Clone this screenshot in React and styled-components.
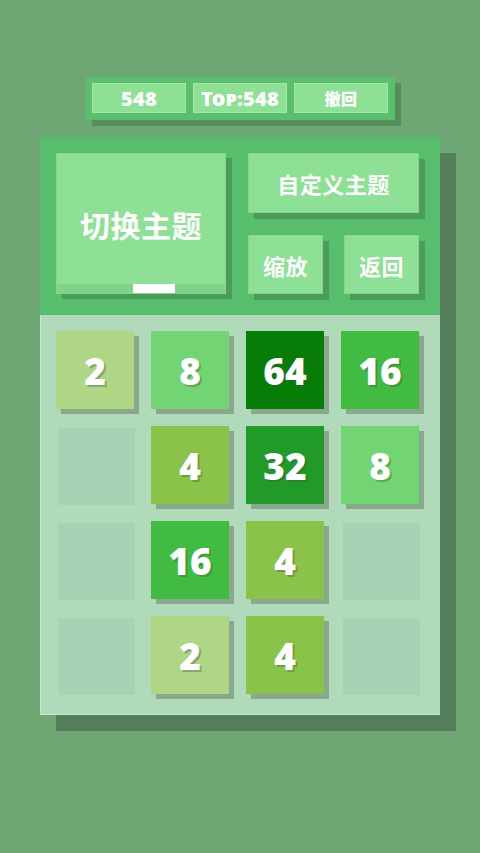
import React from "react";
import styled, { createGlobalStyle } from "styled-components";

const GlobalStyle = createGlobalStyle`
  html, body {
    margin: 0;
    padding: 0;
    background: #6ea774;
  }
  body {
    font-family: "Noto Sans", "Noto Sans CJK SC", sans-serif;
  }
`;

const Page = styled.div`
  width: 480px;
  min-height: 853px;
  display: flex;
  flex-direction: column;
  align-items: center;
  padding-top: 77px;
  box-sizing: border-box;
`;

const ScoreBar = styled.div`
  display: flex;
  gap: 7px;
  padding: 6px 7px 7px 6px;
  background: #5abe6d;
  box-shadow: 6px 6px 0 #568d5d;
  margin-left: 1px;
`;

const ScoreCell = styled.div`
  width: 94px;
  height: 30px;
  box-sizing: border-box;
  border: 1px solid #a2e8a9;
  background: #8de095;
  color: #fff;
  display: flex;
  align-items: center;
  justify-content: center;
  font-family: "Noto Sans", "Noto Sans CJK SC", sans-serif;
  font-weight: 900;
  font-size: ${(p) => (p.$cjk ? "16px" : "20px")};
  font-variant: small-caps;
  letter-spacing: 0.3px;
`;

const Panel = styled.div`
  margin-top: 17px;
  width: 400px;
  display: flex;
  flex-direction: column;
  box-shadow: 16px 16px 0 #557f5a;
`;

const Header = styled.div`
  background: #58bd6c;
  padding: 16px 21px 21px 16px;
  display: flex;
  gap: 22px;
`;

const BigButton = styled.div`
  position: relative;
  width: 170px;
  height: 141px;
  box-sizing: border-box;
  background: #8de095;
  border: 1px solid #84d68c;
  box-shadow: 6px 5px 0 #4b9c5a;
  display: flex;
  align-items: center;
  justify-content: center;
  color: #fff;
  font-family: "Noto Sans CJK SC", sans-serif;
  font-weight: 700;
  font-size: 30px;
  letter-spacing: 0.5px;
`;

const ButtonFooter = styled.div`
  position: absolute;
  left: 0;
  right: 0;
  bottom: 0;
  height: 9px;
  background: #83d28c;
  display: flex;
  justify-content: center;
`;

const Indicator = styled.div`
  width: 42px;
  height: 9px;
  background: #ffffff;
  margin-left: 26px;
`;

const SideColumn = styled.div`
  display: flex;
  flex-direction: column;
  gap: 22px;
`;

const SideRow = styled.div`
  display: flex;
  gap: 21px;
`;

const Button = styled.div`
  width: ${(p) => p.$w}px;
  height: ${(p) => p.$h}px;
  box-sizing: border-box;
  background: #8de095;
  border: 1px solid #84d68c;
  box-shadow: 6px 6px 0 #4b9c5a;
  display: flex;
  align-items: center;
  justify-content: center;
  color: #fff;
  font-family: "Noto Sans CJK SC", sans-serif;
  font-weight: 700;
  font-size: 22px;
  letter-spacing: 0.5px;
`;

const Board = styled.div`
  background: #b0dab9;
  border-left: 1px solid #c4e6cb;
  border-bottom: 1px solid #c4e6cb;
  padding: 18px 20px 19px 17px;
  display: grid;
  grid-template-columns: repeat(4, 77px);
  grid-auto-rows: 77px;
  gap: 18px;
`;

const Cell = styled.div`
  position: relative;
  background: #a8d2b4;
`;

const TILE_COLORS = {
  2: "#aed685",
  4: "#8bc34a",
  8: "#72d472",
  16: "#42bb42",
  32: "#229a29",
  64: "#077d07",
};

const Tile = styled.div`
  position: absolute;
  left: -2px;
  top: -2px;
  width: 78px;
  height: 78px;
  background: ${(p) => TILE_COLORS[p.$value]};
  box-shadow: 5px 5px 0 #8ba78e;
  display: flex;
  align-items: center;
  justify-content: center;
  color: #fff;
  font-family: "Noto Sans", "DejaVu Sans", sans-serif;
  font-weight: 900;
  font-size: 37px;
  letter-spacing: 0px;
  text-shadow: 2px 2px 0 rgba(60, 80, 60, 0.35);
`;

const grid = [
  [2, 8, 64, 16],
  [0, 4, 32, 8],
  [0, 16, 4, 0],
  [0, 2, 4, 0],
];

export default function App() {
  return (
    <>
      <GlobalStyle />
      <Page>
        <ScoreBar>
          <ScoreCell>548</ScoreCell>
          <ScoreCell>Top:548</ScoreCell>
          <ScoreCell $cjk>撤回</ScoreCell>
        </ScoreBar>
        <Panel>
          <Header>
            <BigButton>
              切换主题
              <ButtonFooter>
                <Indicator />
              </ButtonFooter>
            </BigButton>
            <SideColumn>
              <Button $w={171} $h={60}>自定义主题</Button>
              <SideRow>
                <Button $w={75} $h={59}>缩放</Button>
                <Button $w={75} $h={59}>返回</Button>
              </SideRow>
            </SideColumn>
          </Header>
          <Board>
            {grid.flat().map((v, i) => (
              <Cell key={i}>{v > 0 && <Tile $value={v}>{v}</Tile>}</Cell>
            ))}
          </Board>
        </Panel>
      </Page>
    </>
  );
}
